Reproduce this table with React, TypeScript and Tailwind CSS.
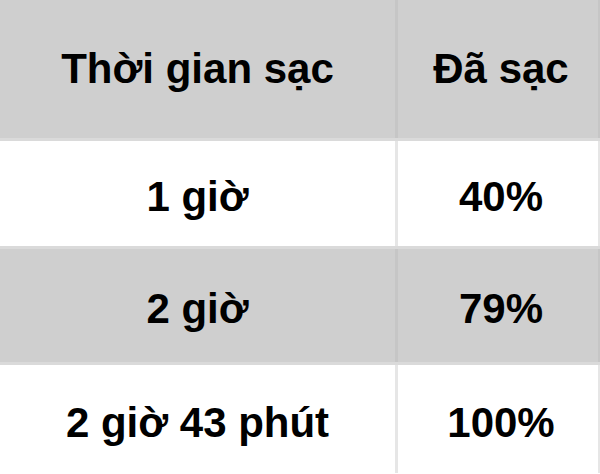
import React from "react";

const rows = [
  { a: "1 giờ", b: "40%", h: "h-[105px]", bg: "bg-white", line: "bg-[#e6e6e6]" },
  { a: "2 giờ", b: "79%", h: "h-[113px]", bg: "bg-[#cfcfcf]", line: "bg-[#c6c6c6]" },
  { a: "2 giờ 43 phút", b: "100%", h: "h-[108px]", bg: "bg-white", line: "bg-[#e6e6e6]" },
];

export default function App() {
  return (
    <div
      className="w-[600px] h-[474px] overflow-hidden bg-white text-black font-bold text-[42px]"
      style={{ fontFamily: '"Liberation Sans", Arial, sans-serif' }}
    >
      <div className="flex h-[138px] bg-[#cfcfcf]">
        <div className="w-[395px] flex items-center justify-center pb-[2px]">Thời gian sạc</div>
        <div className="w-[3px] bg-[#c6c6c6]" />
        <div className="flex-1 flex items-center justify-center pl-[6px] pb-[2px]">Đã sạc</div>
        <div className="w-[2px] bg-[#c6c6c6]" />
      </div>
      {rows.map((r, i) => (
        <React.Fragment key={i}>
          <div className="h-[3px] bg-[#dadada]" />
          <div className={`flex ${r.h} ${r.bg}`}>
            <div className="w-[395px] flex items-center justify-center pt-[6px]">{r.a}</div>
            <div className={`w-[3px] ${r.line}`} />
            <div className="flex-1 flex items-center justify-center pl-[6px] pt-[6px]">{r.b}</div>
            <div className={`w-[2px] ${r.line}`} />
          </div>
        </React.Fragment>
      ))}
    </div>
  );
}
